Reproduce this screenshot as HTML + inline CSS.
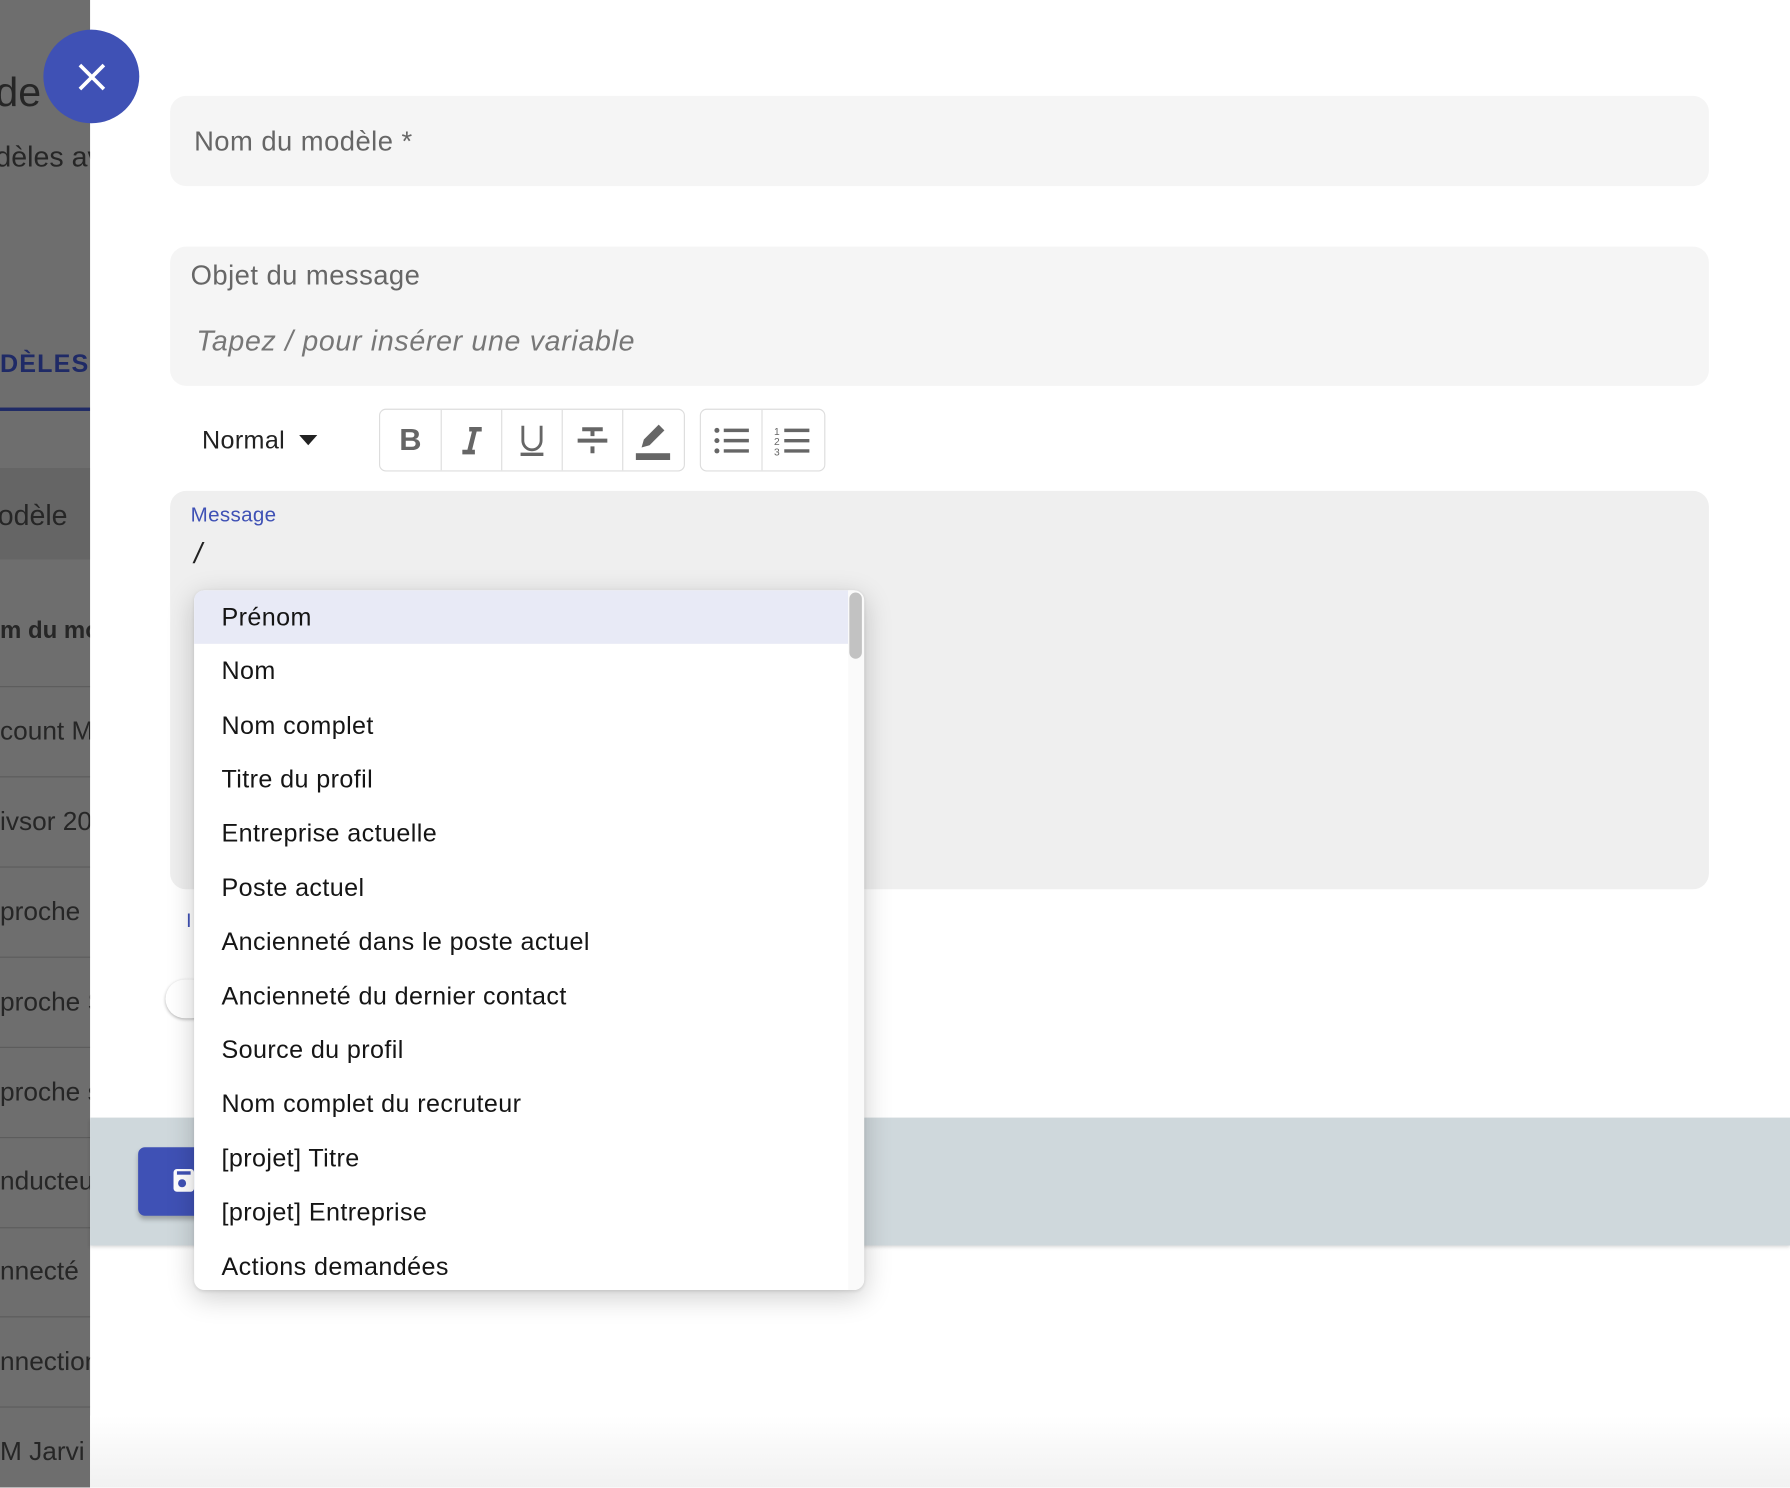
<!DOCTYPE html>
<html><head><meta charset="utf-8"><style>
html,body{margin:0;padding:0;width:1790px;height:1488px;overflow:hidden;background:#fff;font-family:"Liberation Sans",sans-serif}
#w{position:absolute;left:0;top:0;width:1568px;height:1303px;transform:scale(1.14158);transform-origin:0 0;overflow:hidden}
.a{position:absolute}
.left{left:0;top:0;width:79px;height:1303px;background:#6e6e6e;overflow:hidden}
.left .t{position:absolute;color:#262626;font-size:23px;white-space:nowrap}
.sep{position:absolute;left:0;width:79px;height:1px;background:#5c5c5c}
.panel{left:79px;top:0;width:1489px;height:1303px;background:#fff}
.field{background:#f5f5f5;border-radius:14px;left:149px;width:1348px}
.btn{position:absolute;top:0;width:53px;height:53px;border-right:1px solid #ddd;display:flex;align-items:center;justify-content:center}
.grp{position:absolute;top:358px;height:53px;border:1px solid #ddd;border-radius:6px;background:#fff;overflow:hidden}
.item{position:absolute;left:24px;font-size:22px;color:#151515;white-space:nowrap;letter-spacing:0.35px}
</style></head><body><div id="w">
<div class="a left">
<div class="t" style="left:-4px;top:60px;font-size:36px">de</div>
<div class="t" style="left:-4px;top:124px;font-size:25px">dèles av</div>
<div class="t" style="left:0;top:306px;font-size:22px;font-weight:bold;color:#1f2a66;letter-spacing:1px">DÈLES</div>
<div class="a" style="left:0;top:357px;width:79px;height:3px;background:#1f2a66"></div>
<div class="a" style="left:0;top:410px;width:79px;height:80px;background:#656565"></div>
<div class="t" style="left:-2px;top:438px;font-size:25px">odèle</div>
<div class="t" style="left:0;top:541px;font-weight:bold;font-size:21px">m du mo</div>
<div class="sep" style="top:601px"></div>
<div class="t" style="left:0;top:627px">count M</div>
<div class="sep" style="top:680px"></div>
<div class="t" style="left:0;top:706px">ivsor 20</div>
<div class="sep" style="top:759px"></div>
<div class="t" style="left:0;top:785px">proche</div>
<div class="sep" style="top:838px"></div>
<div class="t" style="left:0;top:864px">proche S</div>
<div class="sep" style="top:917px"></div>
<div class="t" style="left:0;top:943px">proche s</div>
<div class="sep" style="top:996px"></div>
<div class="t" style="left:0;top:1021px">nducteur</div>
<div class="sep" style="top:1075px"></div>
<div class="t" style="left:0;top:1100px">nnecté</div>
<div class="sep" style="top:1153px"></div>
<div class="t" style="left:0;top:1179px">nnection</div>
<div class="sep" style="top:1232px"></div>
<div class="t" style="left:0;top:1258px">M Jarvi</div>
</div>
<div class="a panel"></div>
<div class="a" style="left:79px;top:1240px;width:1489px;height:63px;background:linear-gradient(#fff,#f1f1f1)"></div>
<div class="a" style="left:38px;top:26px;width:84px;height:82px;border-radius:50%;background:#3f51b5"></div>
<svg class="a" style="left:66px;top:53px" width="29" height="29" viewBox="0 0 29 29"><path d="M4 4L25 25M25 4L4 25" stroke="#fff" stroke-width="3.2"/></svg>
<div class="a field" style="top:84px;height:79px"></div>
<div class="a" style="left:170px;top:111px;font-size:24px;color:#666;letter-spacing:0.4px">Nom du modèle *</div>
<div class="a field" style="top:216px;height:122px"></div>
<div class="a" style="left:167px;top:228px;font-size:24px;color:#666;letter-spacing:0.4px">Objet du message</div>
<div class="a" style="left:172px;top:285px;font-size:25px;font-style:italic;color:#777;letter-spacing:0.6px">Tapez / pour insérer une variable</div>
<div class="a" style="left:177px;top:373px;font-size:22px;color:#222;letter-spacing:0.3px">Normal</div>
<svg class="a" style="left:262px;top:381px" width="16" height="10"><path d="M0 0H16L8 9Z" fill="#222"/></svg>
<div class="grp" style="left:332px;width:266px">
<div class="btn" style="left:0"><span style="font-weight:bold;font-size:27px;color:#666">B</span></div>
<div class="btn" style="left:53px"><svg width="24" height="26"><path d="M10 3H21M4 23H15M15 3L10 23" stroke="#666" stroke-width="4"/></svg></div>
<div class="btn" style="left:106px"><svg width="24" height="30"><path d="M4 2V15A8 8 0 0 0 20 15V2" fill="none" stroke="#666" stroke-width="2.5"/><path d="M2 27H22" stroke="#666" stroke-width="3"/></svg></div>
<div class="btn" style="left:159px"><svg width="30" height="28"><path d="M6 4H24M15 4V10M15 19V25M2 14H28" stroke="#666" stroke-width="3.5"/></svg></div>
<div class="btn" style="left:212px;border-right:0"><svg width="32" height="34"><path d="M6 23L8 16L21 3L26 8L13 21Z" fill="#666"/><rect x="1" y="28" width="30" height="6" fill="#666"/></svg></div>
</div>
<div class="grp" style="left:613px;width:108px">
<div class="btn" style="left:0"><svg width="32" height="26"><circle cx="3" cy="4" r="2.2" fill="#666"/><circle cx="3" cy="13" r="2.2" fill="#666"/><circle cx="3" cy="22" r="2.2" fill="#666"/><path d="M9 4H31M9 13H31M9 22H31" stroke="#666" stroke-width="3"/></svg></div>
<div class="btn" style="left:53px;border-right:0"><svg width="32" height="28"><text x="0" y="9" font-size="9" fill="#666" font-family="Liberation Sans">1</text><text x="0" y="18" font-size="9" fill="#666" font-family="Liberation Sans">2</text><text x="0" y="27" font-size="9" fill="#666" font-family="Liberation Sans">3</text><path d="M9 5H31M9 14H31M9 23H31" stroke="#666" stroke-width="3"/></svg></div>
</div>
<div class="a field" style="top:430px;height:349px;background:#efefef"></div>
<div class="a" style="left:167px;top:441px;font-size:18px;color:#3f51b5;letter-spacing:0.3px">Message</div>
<div class="a" style="left:170px;top:471px;font-size:25px;font-style:italic;color:#222">/</div>
<div class="a" style="left:163px;top:797px;font-size:17px;color:#3f51b5">I</div>
<div class="a" style="left:145px;top:858px;width:40px;height:34px;border-radius:17px;background:#fff;box-shadow:0 1px 3px rgba(0,0,0,.3)"></div>
<div class="a" style="left:79px;top:979px;width:1489px;height:112px;background:#cfd8dc;box-shadow:0 2px 3px rgba(0,0,0,.15)"></div>
<div class="a" style="left:121px;top:1005px;width:80px;height:60px;border-radius:6px;background:#3f51b5;box-shadow:0 3px 4px rgba(0,0,0,.25)"></div>
<div class="a" style="left:152px;top:1024px;width:18px;height:20px;border-radius:3px;background:#fff"></div>
<div class="a" style="left:156px;top:1033px;width:7px;height:7px;border-radius:50%;background:#3f51b5"></div>
<div class="a" style="left:155px;top:1026px;width:12px;height:3px;background:#3f51b5"></div>
<div class="a" style="left:170px;top:517px;width:587px;height:613px;background:#fff;border-radius:9px;box-shadow:0 6px 24px rgba(0,0,0,.2),0 1px 3px rgba(0,0,0,.1);overflow:hidden">
<div class="a" style="left:0;top:0;width:573px;height:47px;background:#e8eaf6"></div>
<div class="a" style="left:573px;top:0;width:14px;height:613px;background:#fafafa"></div>
<div class="a" style="left:574px;top:2px;width:11px;height:58px;border-radius:6px;background:#c2c2c2"></div>
<div class="item" style="top:11px">Prénom</div>
<div class="item" style="top:58px">Nom</div>
<div class="item" style="top:106px">Nom complet</div>
<div class="item" style="top:153px">Titre du profil</div>
<div class="item" style="top:200px">Entreprise actuelle</div>
<div class="item" style="top:248px">Poste actuel</div>
<div class="item" style="top:295px">Ancienneté dans le poste actuel</div>
<div class="item" style="top:343px">Ancienneté du dernier contact</div>
<div class="item" style="top:390px">Source du profil</div>
<div class="item" style="top:437px">Nom complet du recruteur</div>
<div class="item" style="top:485px">[projet] Titre</div>
<div class="item" style="top:532px">[projet] Entreprise</div>
<div class="item" style="top:580px">Actions demandées</div>
</div>
</div></body></html>
